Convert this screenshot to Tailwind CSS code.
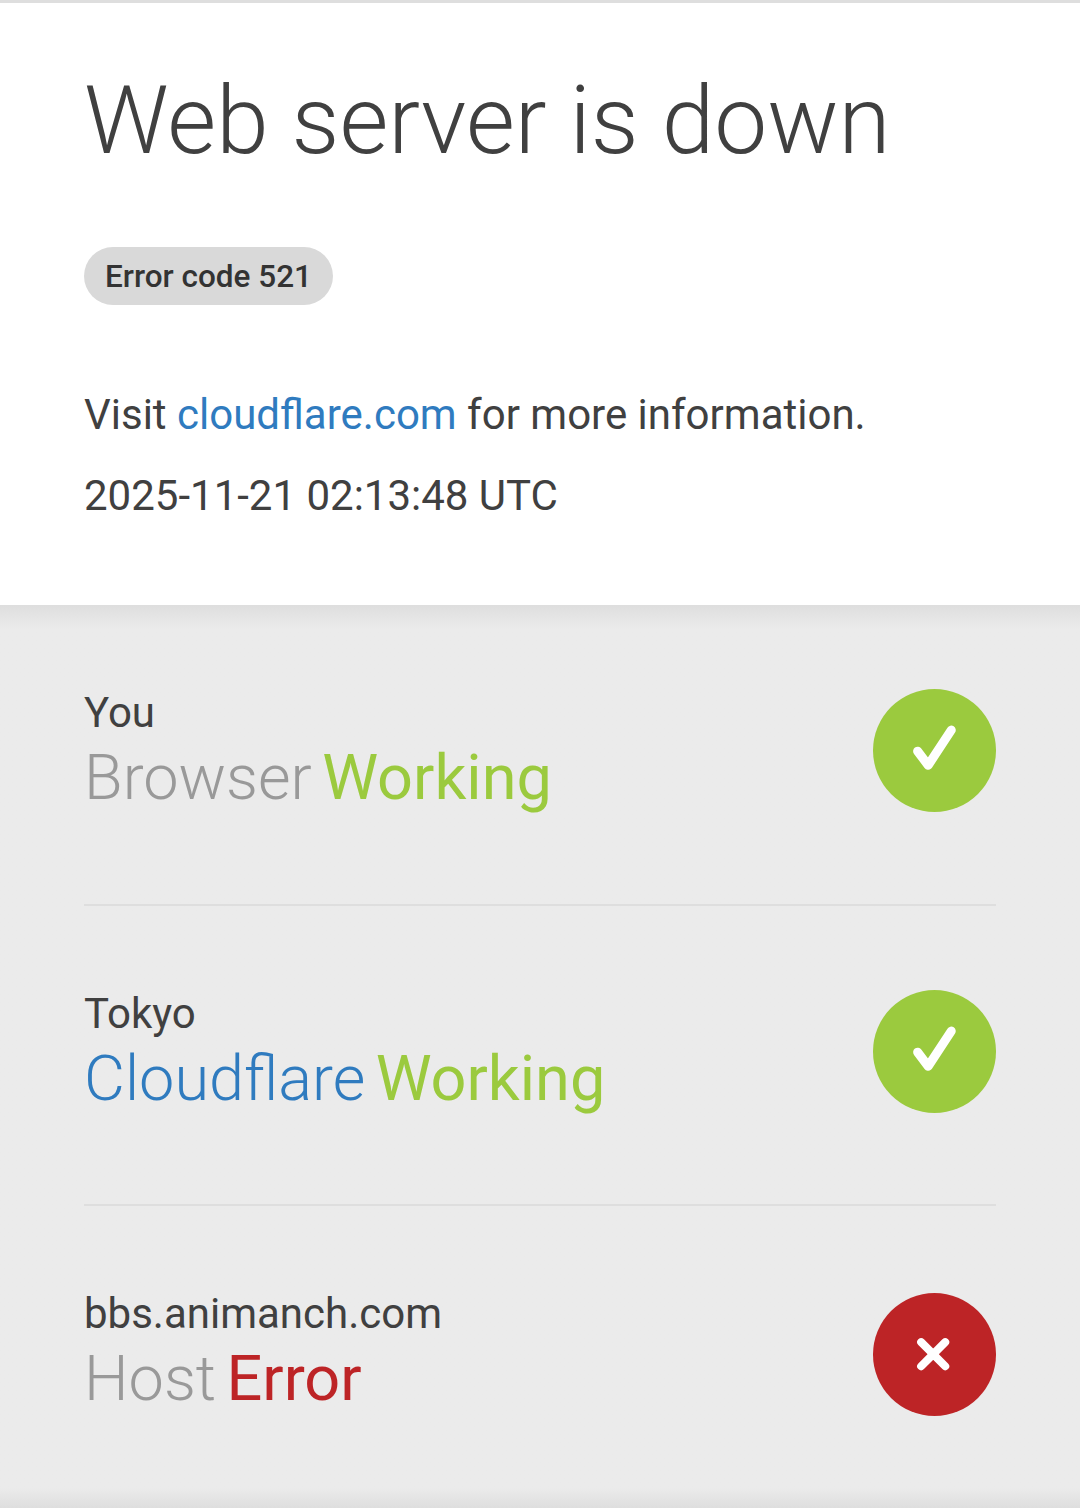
<!DOCTYPE html>
<html lang="en">

<head>
  <meta charset="UTF-8">
  <meta name="viewport" content="width=device-width, initial-scale=1.0">
  <title>Web server is down</title>
  <script src="https://cdn.jsdelivr.net/npm/@tailwindcss/browser@4"></script>
</head>

<body class="h-[1508px] overflow-hidden bg-[#ebebeb] font-['Roboto',sans-serif] text-[#404040]">
  <!-- Header -->
  <header class="h-[605px] border-t-[3px] border-[#dedede] bg-white px-[84px]">
    <h1 class="pt-[63px] text-[94.5px] leading-[110px] font-light">Web server is down</h1>
    <div class="mt-[71px] flex">
      <span class="flex h-[58px] items-center rounded-full bg-[#d9d9d9] px-[21px] pt-[1px] text-[31.5px] font-medium text-[#333]">Error code 521</span>
    </div>
    <p class="mt-[85px] text-[42px] leading-[50px]">Visit <span class="text-[#2f7bbf]">cloudflare.com</span> for more information.</p>
    <p class="mt-[31px] text-[42px] leading-[50px]">2025-11-21 02:13:48 UTC</p>
  </header>

  <!-- Status rows -->
  <main class="flex h-[903px] flex-col bg-gradient-to-b from-[#dedede] to-[#ebebeb] to-[24px] px-[84px]">
    <div class="flex h-[301px] justify-between border-b-2 border-[#dedede] pt-[84px]">
      <div>
        <p class="text-[42px] leading-[48px]">You</p>
        <p class="mt-[4px] text-[63px] leading-[74px] font-light text-[#999]">Browser <span class="-ml-[5px] font-normal text-[#9bca3e]">Working</span></p>
      </div>
      <div class="h-[123.4px] w-[123.4px] rounded-full bg-[#9bca3e]">
        <svg class="h-full w-full" viewBox="0 0 123 123" fill="none" stroke="#fff" stroke-width="9" stroke-linecap="round" stroke-linejoin="round"><path d="M44.5 62 L 55 76 L 78 41"/></svg>
      </div>
    </div>
    <div class="flex h-[300px] justify-between border-b-2 border-[#dedede] pt-[84px]">
      <div>
        <p class="text-[42px] leading-[48px]">Tokyo</p>
        <p class="mt-[4px] text-[63px] leading-[74px] font-light text-[#2f7bbf]">Cloudflare <span class="-ml-[5px] font-normal text-[#9bca3e]">Working</span></p>
      </div>
      <div class="h-[123.4px] w-[123.4px] rounded-full bg-[#9bca3e]">
        <svg class="h-full w-full" viewBox="0 0 123 123" fill="none" stroke="#fff" stroke-width="9" stroke-linecap="round" stroke-linejoin="round"><path d="M44.5 62 L 55 76 L 78 41"/></svg>
      </div>
    </div>
    <div class="flex flex-1 justify-between pt-[84px]">
      <div>
        <p class="text-[42px] leading-[48px]">bbs.animanch.com</p>
        <p class="mt-[4px] text-[63px] leading-[74px] font-light text-[#999]">Host <span class="-ml-[5px] font-normal text-[#bd2426]">Error</span></p>
      </div>
      <div class="mt-[3px] h-[123.4px] w-[123.4px] rounded-full bg-[#bd2426]">
        <svg class="h-full w-full" viewBox="0 0 123 123" fill="none" stroke="#fff" stroke-width="8" stroke-linecap="round"><path d="M48 49 L 72 73 M72 49 L 48 73"/></svg>
      </div>
    </div>
    <!-- Bottom edge shade -->
    <div class="-mx-[84px] h-[20px] bg-gradient-to-b from-[#ebebeb] to-[#dedede]"></div>
  </main>
</body>

</html>
